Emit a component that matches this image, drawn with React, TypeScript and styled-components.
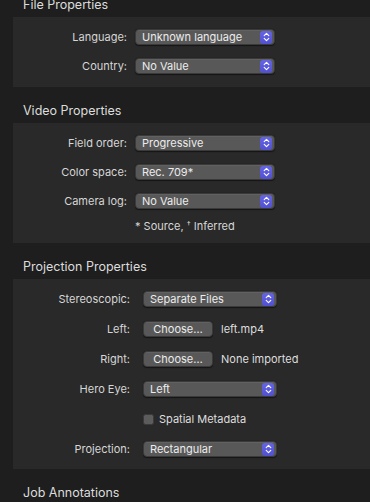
import styled, { createGlobalStyle } from 'styled-components';

const GlobalStyle = createGlobalStyle`
  html, body {
    margin: 0;
    padding: 0;
    background: #1e1e1e;
  }
  body {
    font-family: Inter, "Noto Sans", "Liberation Sans", sans-serif;
    -webkit-font-smoothing: antialiased;
  }
`;

function Stepper() {
  return (
    <StepBtn>
      <svg width="7" height="10" viewBox="0 0 7 10">
        <path d="M1.2 3.6 L3.5 1.4 L5.8 3.6 M1.2 6.4 L3.5 8.6 L5.8 6.4" fill="none" stroke="#fff" strokeWidth="1.1" strokeLinecap="round" strokeLinejoin="round" />
      </svg>
    </StepBtn>
  );
}

function Popup({ value, wide }: { value: string; wide?: boolean }) {
  return (
    <PopupBox $w={wide ? 140 : 134}>
      <PopupText>{value}</PopupText>
      <Stepper />
    </PopupBox>
  );
}

function App() {
  return (
    <Page>
      <GlobalStyle />
      <Header>File Properties</Header>
      <Panel $gap={13} $pt={12} $pb={13}>
        <Row $col={114}>
          <Label>Language:</Label>
          <Popup value="Unknown language" wide />
        </Row>
        <Row $col={114}>
          <Label>Country:</Label>
          <Popup value="No Value" wide />
        </Row>
      </Panel>

      <Header>Video Properties</Header>
      <Panel $gap={13} $pt={12} $pb={9}>
        <Row $col={114}>
          <Label>Field order:</Label>
          <Popup value="Progressive" wide />
        </Row>
        <Row $col={114}>
          <Label>Color space:</Label>
          <Popup value="Rec. 709*" wide />
        </Row>
        <Row $col={114}>
          <Label>Camera log:</Label>
          <Popup value="No Value" wide />
        </Row>
        <Row $col={114} $shift={-4}>
          <span />
          <Note>* Source, <sup>†</sup> Inferred</Note>
        </Row>
      </Panel>

      <Header>Projection Properties</Header>
      <Panel $gap={14} $pt={12} $pb={12}>
        <Row $col={117} $cg={13}>
          <Label>Stereoscopic:</Label>
          <Popup value="Separate Files" />
        </Row>
        <Row $col={117} $cg={13}>
          <Label>Left:</Label>
          <FileCell>
            <ChooseBtn>Choose…</ChooseBtn>
            <FileName>left.mp4</FileName>
          </FileCell>
        </Row>
        <Row $col={117} $cg={13}>
          <Label>Right:</Label>
          <FileCell>
            <ChooseBtn>Choose…</ChooseBtn>
            <FileName>None imported</FileName>
          </FileCell>
        </Row>
        <Row $col={117} $cg={13}>
          <Label>Hero Eye:</Label>
          <Popup value="Left" />
        </Row>
        <Row $col={117} $cg={13}>
          <span />
          <CheckLine>
            <CheckBox />
            <FileName>Spatial Metadata</FileName>
          </CheckLine>
        </Row>
        <Row $col={117} $cg={13}>
          <Label>Projection:</Label>
          <Popup value="Rectangular" />
        </Row>
      </Panel>

      <Header>Job Annotations</Header>
    </Page>
  );
}

export default App;

const Page = styled.div`
  width: 370px;
  margin-top: -19px;
  display: flex;
  flex-direction: column;
`;

const Header = styled.div`
  height: 36px;
  box-sizing: border-box;
  padding: 0 0 5px 23px;
  display: flex;
  align-items: flex-end;
  font-size: 12.5px;
  line-height: 14px;
  color: #dcdcdc;
  flex-shrink: 0;
`;

const Panel = styled.div<{ $gap: number; $pt: number; $pb: number }>`
  margin-left: 13px;
  background: #292929;
  display: flex;
  flex-direction: column;
  gap: ${(p) => p.$gap}px;
  padding: ${(p) => p.$pt}px 0 ${(p) => p.$pb}px;
  flex-shrink: 0;
`;

const Row = styled.div<{ $col: number; $cg?: number; $shift?: number }>`
  display: grid;
  grid-template-columns: ${(p) => p.$col}px auto;
  column-gap: ${(p) => p.$cg ?? 8}px;
  align-items: center;
  height: 16px;
  margin-top: ${(p) => p.$shift ?? 0}px;
`;

const Label = styled.div`
  text-align: right;
  font-size: 11px;
  color: #d6d6d6;
`;

const PopupBox = styled.div<{ $w: number }>`
  width: ${(p) => p.$w}px;
  height: 16px;
  box-sizing: border-box;
  border-radius: 4px;
  background: #585858;
  border: 0.5px solid #3a3a3a;
  box-shadow: 0 0.5px 1px rgba(0, 0, 0, 0.5), inset 0 0.5px 0 rgba(255, 255, 255, 0.12);
  display: flex;
  align-items: center;
  justify-content: space-between;
  padding: 0 2px 0 6px;
`;

const PopupText = styled.span`
  font-size: 11px;
  color: #ececec;
`;

const StepBtn = styled.span`
  width: 12px;
  height: 13px;
  border-radius: 3px;
  background: linear-gradient(#6464e6, #5151cf);
  display: flex;
  align-items: center;
  justify-content: center;
`;

const Note = styled.div`
  font-size: 11px;
  color: #d6d6d6;
  sup {
    font-size: 8px;
    vertical-align: 3px;
    line-height: 0;
  }
`;

const FileCell = styled.div`
  display: flex;
  align-items: center;
  gap: 8px;
`;

const ChooseBtn = styled.div`
  width: 70px;
  height: 16px;
  box-sizing: border-box;
  border-radius: 4px;
  background: #585858;
  border: 0.5px solid #3a3a3a;
  box-shadow: 0 0.5px 1px rgba(0, 0, 0, 0.5), inset 0 0.5px 0 rgba(255, 255, 255, 0.12);
  display: flex;
  align-items: center;
  justify-content: center;
  font-size: 11px;
  color: #ececec;
`;

const FileName = styled.span`
  font-size: 11px;
  color: #dedede;
`;

const CheckLine = styled.div`
  display: flex;
  align-items: center;
  gap: 5px;
`;

const CheckBox = styled.span`
  width: 11px;
  height: 11px;
  box-sizing: border-box;
  border-radius: 2.5px;
  background: #5c5c5c;
  border: 0.5px solid #3a3a3a;
`;
